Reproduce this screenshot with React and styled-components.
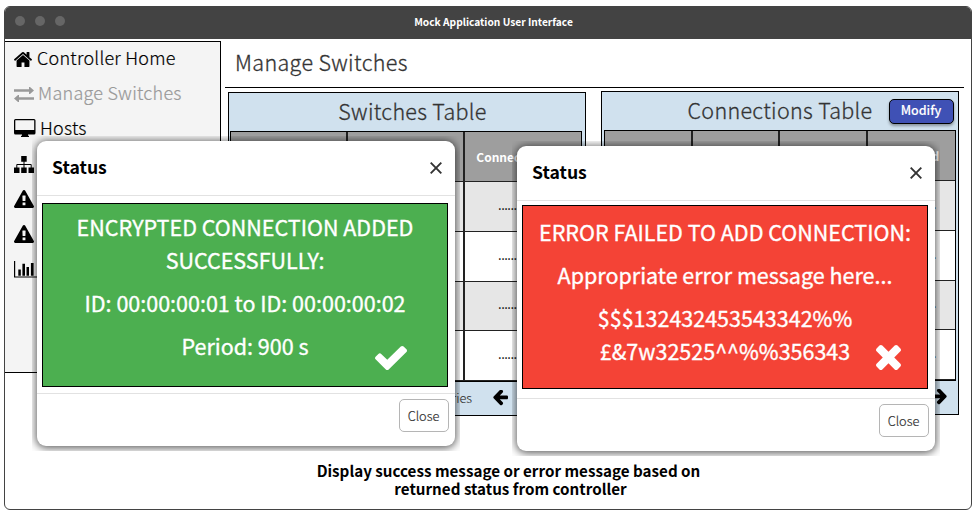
import React from "react";
import styled, { createGlobalStyle } from "styled-components";

const Global = createGlobalStyle`
  * { box-sizing: border-box; }
  body { margin: 0; background: #fff; font-family: "Noto Sans CJK SC", sans-serif; color: #000; }
  p, h1, h2, h3 { margin: 0; }
  svg { display: block; flex: none; }
`;

const Page = styled.div`
  position: relative;
  width: 977px;
  height: 517px;
  padding: 6px 0 0 4px;
  overflow: hidden;
`;
const Frame = styled.div`
  width: 968px;
  height: 504px;
  border: 1px solid #434343;
  border-radius: 6px;
  overflow: hidden;
  display: flex;
  flex-direction: column;
`;
const TitleBar = styled.header`
  height: 32px;
  flex: none;
  background: #434343;
  display: grid;
  grid-template-columns: 1fr auto 1fr;
  align-items: center;
  padding: 0 10px;
  margin-right: -1px;
`;
const Dots = styled.div`
  display: flex;
  gap: 10px;
  margin-top: -4px;
`;
const Dot = styled.i`
  width: 10px;
  height: 10px;
  border-radius: 50%;
  background: #666;
`;
const AppName = styled.h1`
  font-size: 10.2px;
  font-weight: 700;
  line-height: 16px;
  color: #fff;
  margin: -2px 0 0 10px;
`;
const Body = styled.div`
  display: flex;
  height: 346px;
  flex: none;
`;
const Sidebar = styled.nav`
  width: 217px;
  height: 332px;
  margin: 2px 0 0 -1px;
  border: 1px solid #000;
  background: #f4f4f4;
  flex: none;
`;
const NavItem = styled.div`
  display: flex;
  align-items: center;
  height: 35px;
  padding-left: 9px;
  gap: ${(p) => p.$gap}px;
  font-size: 18px;
  line-height: 26px;
  font-weight: 300;
  letter-spacing: 0.24px;
  color: ${(p) => (p.$active ? "#999" : "#000")};
  svg { margin-bottom: ${(p) => p.$lift || 0}px; }
`;
const NavLabel = styled.span`
  margin-top: -6px;
  -webkit-text-stroke: 0.2px;
`;
const Main = styled.main`
  flex: 1;
  min-width: 0;
  padding: 0 7px 0 4px;
`;
const Heading = styled.h2`
  height: 49px;
  border-bottom: 1px solid #000;
  padding: 7px 0 0 10px;
  font-size: 21.5px;
  line-height: 32px;
  font-weight: 300;
  color: #333;
  letter-spacing: 0.36px;
  -webkit-text-stroke: 0.3px;
`;
const Panels = styled.div`
  display: flex;
  gap: 15px;
  padding: 3px 0 0 3px;
`;
const Panel = styled.section`
  width: 358px;
  height: 324px;
  flex: none;
  margin-top: ${(p) => p.$drop || 0}px;
  border: 1px solid #000;
  background: #d0e1ee;
  padding: 0 2px 0 ${(p) => p.$inset}px;
`;
const PanelHead = styled.div`
  height: 38px;
  display: flex;
  align-items: center;
  justify-content: center;
  gap: 16px;
  padding-left: ${(p) => p.$shift || 0}px;
`;
const PanelTitle = styled.h3`
  font-size: 21.5px;
  font-weight: 300;
  line-height: 34px;
  color: #333;
  margin-top: -2px;
  letter-spacing: 0.32px;
  -webkit-text-stroke: 0.3px;
`;
const Modify = styled.button`
  width: 65px;
  height: 25px;
  padding: 0 0 3px;
  border: 1px solid #000;
  border-radius: 5px;
  background: #3f51b5;
  color: #fff;
  font: 500 12.5px/20px "Noto Sans CJK SC", sans-serif;
  -webkit-text-stroke: 0.1px;
  box-shadow: 0 2px 3px rgba(0, 0, 0, 0.35);
`;
const Table = styled.div`
  width: 352px;
  border: 1px solid #000;
  display: grid;
  grid-template-columns: ${(p) => p.$cols};
  grid-template-rows: 50px 50px 50px 49px 50px;
`;
const Cell = styled.div`
  display: flex;
  align-items: center;
  justify-content: center;
  border-right: ${(p) => (p.$last ? 0 : 2)}px solid #222;
  border-bottom: 1px solid #222;
  background: ${(p) => p.$bg};
  color: ${(p) => (p.$head ? "#fff" : "#000")};
  font-size: ${(p) => (p.$head ? 12 : 9.5)}px;
  font-weight: 700;
  padding-bottom: ${(p) => (p.$head ? 0 : 2)}px;
`;
const Pager = styled.div`
  height: 32px;
  display: flex;
  align-items: center;
  justify-content: flex-end;
  gap: 20px;
  padding-right: ${(p) => p.$end}px;
  font-size: 12.7px;
  font-weight: 300;
  color: #333;
`;
const PagerText = styled.span`
  margin-top: -2px;
  -webkit-text-stroke: 0.15px;
`;
const Caption = styled.p`
  margin: 76px 0 0 41px;
  text-align: center;
  font-size: 15.2px;
  line-height: 18px;
  font-weight: 700;
`;
const CaptionEnd = styled.span`
  padding-left: 4px;
`;
const Dialog = styled.div`
  position: absolute;
  left: ${(p) => p.$x}px;
  top: ${(p) => p.$y}px;
  width: 418px;
  height: 305px;
  border-radius: 9px;
  background: #fff;
  box-shadow: 0 1px 9px 1px rgba(0, 0, 0, 0.65);
  clip-path: inset(-5px);
  display: flex;
  flex-direction: column;
`;
const DialogHead = styled.div`
  height: 55px;
  flex: none;
  border-bottom: 1px solid #e2e2e2;
  padding: 0 13px 0 15px;
  display: flex;
  align-items: center;
  justify-content: space-between;
`;
const DialogTitle = styled.h2`
  font-size: 17.6px;
  line-height: 26px;
  font-weight: 700;
  margin-top: -2px;
`;
const Message = styled.div`
  margin: ${(p) => p.$gap}px 7px 0 5px;
  height: 184px;
  flex: none;
  border: 1px solid #000;
  background: ${(p) => p.$bg};
  color: #fff;
  text-align: center;
  font-size: 21.5px;
  line-height: 33px;
  -webkit-text-stroke: 0.35px #fff;
  padding-top: ${(p) => p.$pad}px;
  position: relative;
  p + p { margin-top: 10px; }
`;
const Mark = styled.div`
  position: absolute;
  left: ${(p) => p.$x}px;
  top: ${(p) => p.$y}px;
`;
const Line = styled.span`
  display: block;
  white-space: nowrap;
`;
const DialogFoot = styled.div`
  margin-top: ${(p) => p.$gap}px;
  border-top: 1px solid #e2e2e2;
  flex: 1;
  display: flex;
  justify-content: flex-end;
  padding: 5px 6px 0 0;
`;
const CloseButton = styled.button`
  width: 50px;
  height: 33px;
  padding: 1px 1px 0 0;
  border: 1px solid #b5b5b5;
  border-radius: 5px;
  background: #fff;
  color: #333;
  font: 300 12.8px/20px "Noto Sans CJK SC", sans-serif;
  -webkit-text-stroke: 0.2px;
`;

const icons = {
  home: "M1472 992v480q0 26-19 45t-45 19h-384v-384h-256v384h-384q-26 0-45-19t-19-45v-480q0-1 .5-3t.5-3l575-474 575 474q1 2 1 6zm223-69l-62 74q-8 9-21 11h-3q-13 0-21-7l-692-577-692 577q-12 8-24 7-13-2-21-11l-62-74q-8-10-7-23.5t11-21.5l719-599q32-26 76-26t76 26l244 204v-195q0-14 9-23t23-9h192q14 0 23 9t9 23v408l219 182q10 8 11 21.5t-7 23.5z",
  warning: "M1024 1375v-190q0-14-9.5-23.5t-22.5-9.5h-192q-13 0-22.5 9.5t-9.5 23.5v190q0 14 9.5 23.5t22.5 9.5h192q13 0 22.5-9.5t9.5-23.5zm-2-374l18-459q0-12-10-19-13-11-24-11h-220q-11 0-24 11-10 7-10 21l17 457q0 10 10 16.500t24 6.500h185q14 0 23.500-6.500t10.500-16.500zm-14-934l768 1408q35 63-2 126-17 29-46.500 46t-63.500 17h-1536q-34 0-63.500-17t-46.500-46q-37-63-2-126l768-1408q17-31 47-49t65-18 65 18 47 49z",
  check: "M1671 566q0 40-28 68l-724 724-136 136q-28 28-68 28t-68-28l-136-136-362-362q-28-28-28-68t28-68l136-136q28-28 68-28t68 28l294 295 656-657q28-28 68-28t68 28l136 136q28 28 28 68z",
  times: "M1490 1322q0 40-28 68l-136 136q-28 28-68 28t-68-28l-294-294-294 294q-28 28-68 28t-68-28l-136-136q-28-28-28-68t28-68l294-294-294-294q-28-28-28-68t28-68l136-136q28-28 68-28t68 28l294 294 294-294q28-28 68-28t68 28l136 136q28 28 28 68t-28 68l-294 294 294 294q28 28 28 68z",
  arrow: "M1664 896v128q0 53-32.5 90.5t-84.5 37.5h-704l293 294q38 36 38 90t-38 90l-75 76q-37 37-90 37-52 0-91-37l-651-652q-37-37-37-90 0-52 37-91l651-650q38-38 91-38 52 0 90 38l75 74q38 38 38 91t-38 91l-293 293h704q52 0 84.5 37.5t32.5 90.5z",
};
const Glyph = ({ d, box, w, h, fill = "currentColor" }) => (
  <svg viewBox={box} width={w} height={h} preserveAspectRatio="none" fill={fill}><path d={d} /></svg>
);
const Exchange = () => (
  <svg width="20" height="15" fill="currentColor">
    <path d="M0 2.200h15V0h1L20 3.400 16 7h-1V4.700H0zM20 10.200H5V8H4L0 11.400 4 15h1v-2.300h15z" />
  </svg>
);
const Desktop = () => (
  <svg width="22" height="18" fill="currentColor">
    <path fillRule="evenodd" d="M1.500 0h18.500q1.500 0 1.500 1.500V14q0 1.500-1.500 1.500h-6v1.200h1V18H7v-1.300h1v-1.200H1.500Q0 15.500 0 14V1.500Q0 0 1.500 0zM1.300 1.200v9.900h18.900V1.200z" />
  </svg>
);
const Sitemap = () => (
  <svg width="20" height="17">
    <path d="M7.200 0h5.500v5.700H7.200zM0 11.500h5.500V17H0zM7.200 11.500h5.500V17H7.200zM14.500 11.500H20V17h-5.500z" />
    <path d="M10 5v7M2.800 12V8.500h14.400V12" fill="none" stroke="#000" />
  </svg>
);
const Chart = () => (
  <svg width="24" height="17">
    <path d="M.6 0v16H24" fill="none" stroke="#000" strokeWidth="1.200" />
    <path d="M4.300 8.500h2.500v6.200H4.300zM8.400 2.700H11v12H8.400zM12.500 6H15v8.700h-2.500zM16.900 2h2.700v12.700h-2.700z" />
  </svg>
);
const Flip = styled.span`
  transform: scaleX(-1);
`;
const Arrow = () => <Glyph d={icons.arrow} box="64 243 1600 1562" w={16} h={16} fill="#000" />;
const Cross = () => (
  <svg width="12" height="12"><path d="M.7.7l10.600 10.600M11.300.7L.7 11.300" stroke="#333" strokeWidth="1.900" /></svg>
);

const warning = <Glyph d={icons.warning} box="0 0 1792 1664" w={20} h={18} />;
const nav = [
  { label: "Controller Home", gap: 5, lift: 1, icon: <Glyph d={icons.home} box="90 250 1612 1290" w={18} h={15} /> },
  { label: "Manage Switches", gap: 4, active: true, icon: <Exchange /> },
  { label: "Hosts", gap: 4, lift: 3, icon: <Desktop /> },
  { icon: <Sitemap /> },
  { lift: 1, icon: warning },
  { lift: 1, icon: warning },
  { icon: <Chart /> },
];
const shades = ["#e6e6e6", "#fff", "#e6e6e6", "#fff"];

function Grid({ cols, heads }) {
  const last = heads.length - 1;
  return (
    <Table $cols={cols}>
      {heads.map((h, i) => <Cell key={i} $head $bg="#9e9e9e" $last={i === last}>{h}</Cell>)}
      {shades.map((bg, r) => heads.map((_, i) => (
        <Cell key={`${r}-${i}`} $bg={bg} $last={i === last}>................</Cell>
      )))}
    </Table>
  );
}

function StatusDialog({ x, y, gap, footGap, pad, bg, lines, mark, markX, markY }) {
  return (
    <Dialog $x={x} $y={y}>
      <DialogHead><DialogTitle>Status</DialogTitle><Cross /></DialogHead>
      <Message $bg={bg} $gap={gap} $pad={pad}>
        {lines.map((p, i) => <p key={i}>{p.map((t) => <Line key={t}>{t}</Line>)}</p>)}
        <Mark $x={markX} $y={markY}>{mark}</Mark>
      </Message>
      <DialogFoot $gap={footGap}><CloseButton>Close</CloseButton></DialogFoot>
    </Dialog>
  );
}

export default function App() {
  return (
    <Page>
      <Global />
      <Frame>
        <TitleBar>
          <Dots><Dot /><Dot /><Dot /></Dots>
          <AppName>Mock Application User Interface</AppName>
        </TitleBar>
        <Body>
          <Sidebar>
            {nav.map((n, i) => (
              <NavItem key={i} $gap={n.gap} $lift={n.lift} $active={n.active}>{n.icon}{n.label && <NavLabel>{n.label}</NavLabel>}</NavItem>
            ))}
          </Sidebar>
          <Main>
            <Heading>Manage Switches</Heading>
            <Panels>
              <Panel $drop={1} $inset={1}>
                <PanelHead $shift={12}><PanelTitle>Switches Table</PanelTitle></PanelHead>
                <Grid cols="117px 117px 1fr" heads={["Switch ID", "Status", "Connected Host"]} />
                <Pager $end={75}><PagerText>entries</PagerText><Arrow /></Pager>
              </Panel>
              <Panel $inset={2}>
                <PanelHead $shift={81}><PanelTitle>Connections Table</PanelTitle><Modify>Modify</Modify></PanelHead>
                <Grid cols="88px 87px 88px 1fr" heads={["Source", "Target", "Period", "Activated"]} />
                <Pager $end={8}><Flip><Arrow /></Flip></Pager>
              </Panel>
            </Panels>
          </Main>
        </Body>
        <Caption>Display success message or error message based on<br /><CaptionEnd>returned status from controller</CaptionEnd></Caption>
      </Frame>
      <StatusDialog x={37} y={141} gap={7} footGap={6} pad={6} bg="#4caf50"
        lines={[["ENCRYPTED CONNECTION ADDED", "SUCCESSFULLY:"], ["ID: 00:00:00:01 to ID: 00:00:00:02"], ["Period: 900 s"]]}
        mark={<Glyph d={icons.check} box="121 334 1550 1188" w={32} h={24} fill="#fff" />} markX={332} markY={142} />
      <StatusDialog x={517} y={146} gap={4} footGap={9} pad={9} bg="#f44336"
        lines={[["ERROR FAILED TO ADD CONNECTION:"], ["Appropriate error message here..."], ["$$$132432453543342%%", "£&7w32525^^%%356343"]]}
        mark={<Glyph d={icons.times} box="302 366 1188 1188" w={25} h={25} fill="#fff" />} markX={353} markY={139} />
    </Page>
  );
}
